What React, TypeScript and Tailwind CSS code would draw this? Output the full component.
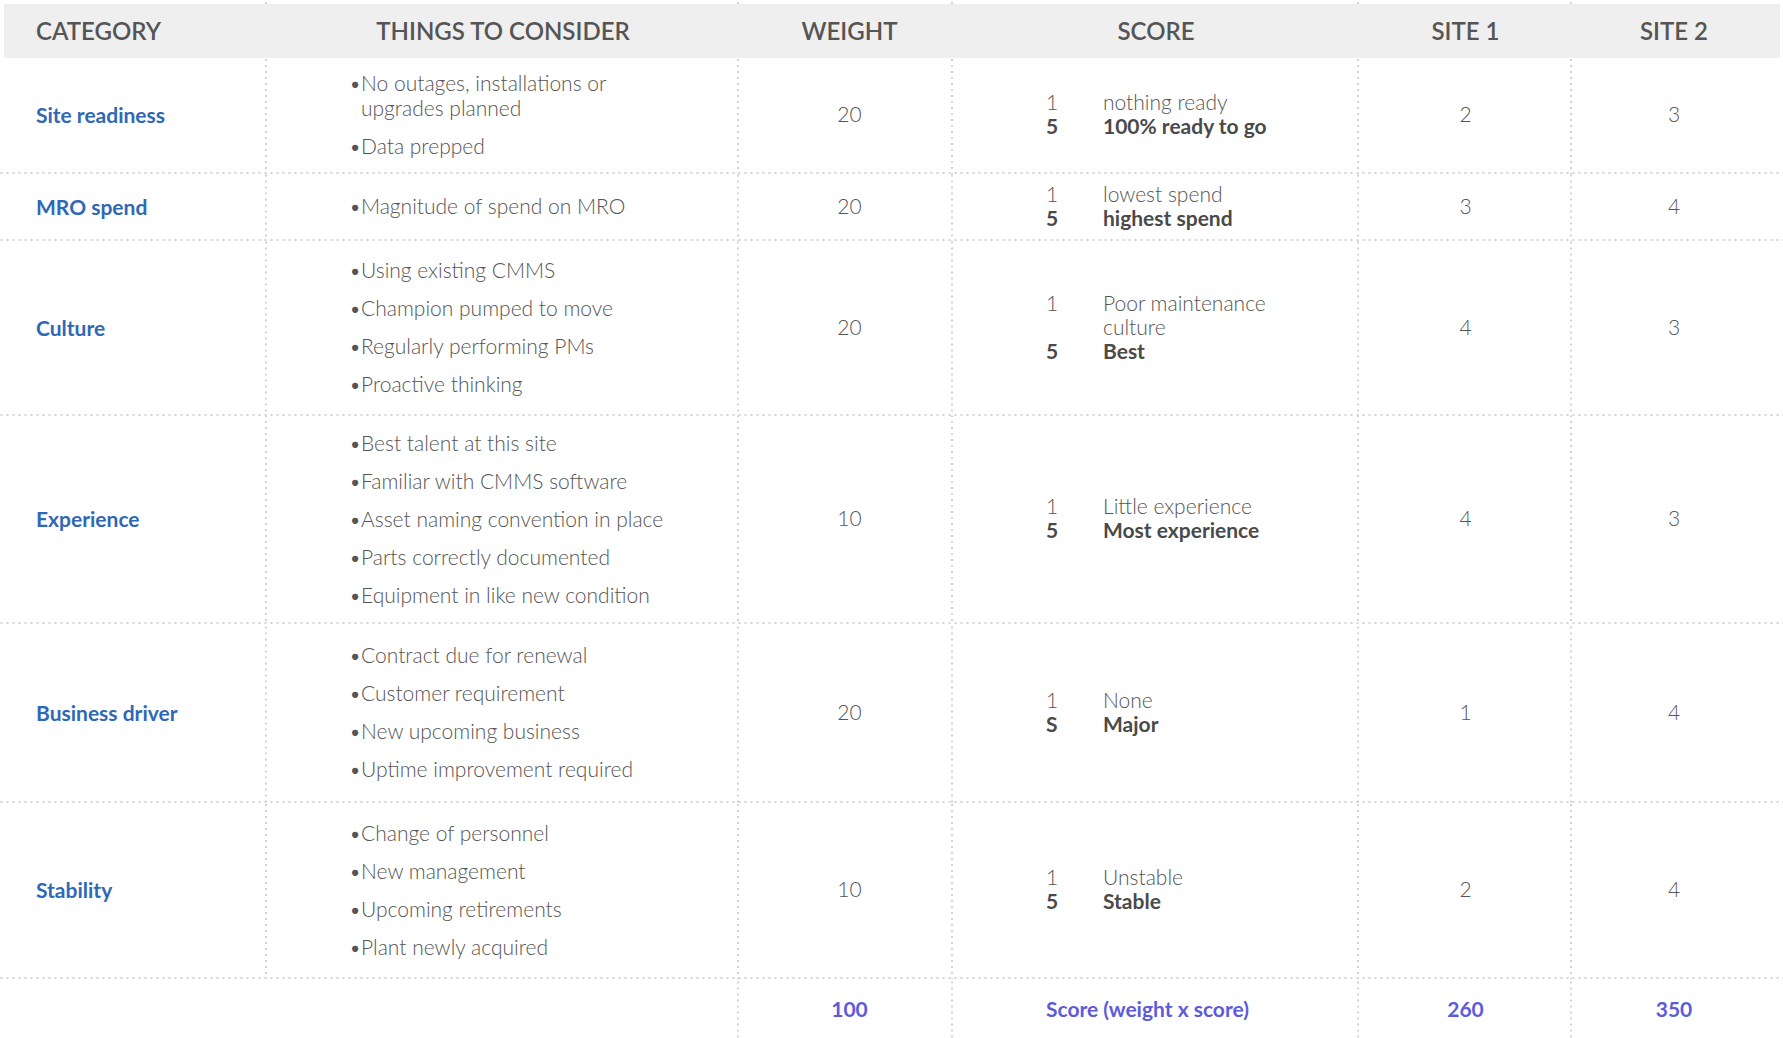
import React from "react";

type Row = {
  category: string;
  things: string[];
  weight: number;
  low: string;
  high: string;
  highNum: string;
  site1: number;
  site2: number;
  height: string;
};

const rows: Row[] = [
  {
    category: "Site readiness",
    things: ["No outages, installations or upgrades planned", "Data prepped"],
    weight: 20,
    low: "nothing ready",
    high: "100% ready to go",
    highNum: "5",
    site1: 2,
    site2: 3,
    height: "h-[116px]",
  },
  {
    category: "MRO spend",
    things: ["Magnitude of spend on MRO"],
    weight: 20,
    low: "lowest spend",
    high: "highest spend",
    highNum: "5",
    site1: 3,
    site2: 4,
    height: "h-[67px]",
  },
  {
    category: "Culture",
    things: [
      "Using existing CMMS",
      "Champion pumped to move",
      "Regularly performing PMs",
      "Proactive thinking",
    ],
    weight: 20,
    low: "Poor maintenance culture",
    high: "Best",
    highNum: "5",
    site1: 4,
    site2: 3,
    height: "h-[175px]",
  },
  {
    category: "Experience",
    things: [
      "Best talent at this site",
      "Familiar with CMMS software",
      "Asset naming convention in place",
      "Parts correctly documented",
      "Equipment in like new condition",
    ],
    weight: 10,
    low: "Little experience",
    high: "Most experience",
    highNum: "5",
    site1: 4,
    site2: 3,
    height: "h-[208px]",
  },
  {
    category: "Business driver",
    things: [
      "Contract due for renewal",
      "Customer requirement",
      "New upcoming business",
      "Uptime improvement required",
    ],
    weight: 20,
    low: "None",
    high: "Major",
    highNum: "S",
    site1: 1,
    site2: 4,
    height: "h-[179px]",
  },
  {
    category: "Stability",
    things: [
      "Change of personnel",
      "New management",
      "Upcoming retirements",
      "Plant newly acquired",
    ],
    weight: 10,
    low: "Unstable",
    high: "Stable",
    highNum: "5",
    site1: 2,
    site2: 4,
    height: "h-[176px]",
  },
];

// dotted rules drawn as repeating gradients (2px dots every 6px)
const hLine =
  "bg-[linear-gradient(to_right,#d3d3d3_2px,transparent_2px)] bg-[length:6px_2px] bg-repeat-x bg-bottom";
const vLine =
  "bg-[linear-gradient(to_bottom,#d3d3d3_2px,transparent_2px)] bg-[length:2px_6px] bg-repeat-y bg-right";

const cols = "grid grid-cols-[267px_472px_214px_406px_213px_211px]";

function HeaderCell({
  label,
  first,
  last,
  shift = "",
}: {
  label: string;
  first?: boolean;
  last?: boolean;
  shift?: string;
}) {
  return (
    <div className={`pt-1 ${first ? "pl-1" : ""} ${last ? "pr-[3px]" : vLine}`}>
      <div
        className={`h-[54px] bg-[#efefef] flex items-center text-[24px] font-semibold text-[#555] uppercase ${
          first ? "pl-[32px]" : `justify-center ${shift}`
        }`}
      >
        {label}
      </div>
    </div>
  );
}

export default function App() {
  return (
    <div
      className="w-[1783px] h-[1038px] bg-white overflow-hidden"
      style={{ fontFamily: "Lato, 'Open Sans', sans-serif" }}
    >
      <div className={cols}>
        <HeaderCell label="Category" first />
        <HeaderCell label="Things to consider" />
        <HeaderCell label="Weight" shift="pl-[7px]" />
        <HeaderCell label="Score" />
        <HeaderCell label="Site 1" />
        <HeaderCell label="Site 2" last shift="pr-[4px]" />
      </div>

      {rows.map((r) => (
        <div key={r.category} className={`${cols} ${r.height} ${hLine}`}>
          <div className={`${vLine} flex items-center pl-[36px] pb-[2px]`}>
            <span className="text-[21px] font-bold text-[#2f68b4]">
              {r.category}
            </span>
          </div>
          <div className={`${vLine} flex items-center pl-[82px] pb-[4px]`}>
            <ul className="flex flex-col gap-[13px] w-[330px]">
              {r.things.map((t) => (
                <li
                  key={t}
                  className="flex text-[21px] leading-[25px] font-light text-[#555]"
                >
                  <span className="w-[12px] shrink-0">•</span>
                  <span className="max-w-[316px]">{t}</span>
                </li>
              ))}
            </ul>
          </div>
          <div
            className={`${vLine} flex items-center justify-center pl-[7px] pb-[4px] text-[21px] font-light text-[#555]`}
          >
            {r.weight}
          </div>
          <div className={`${vLine} flex items-center pl-[93px] pb-[4px]`}>
            <div className="grid grid-cols-[57px_190px] text-[21px] leading-[24px] text-[#555]">
              <span className="font-light">1</span>
              <span className="font-light">{r.low}</span>
              <span className="font-bold text-[#4a4a4a]">{r.highNum}</span>
              <span className="font-bold text-[#4a4a4a]">{r.high}</span>
            </div>
          </div>
          <div
            className={`${vLine} flex items-center justify-center pb-[4px] text-[21px] font-light text-[#555]`}
          >
            {r.site1}
          </div>
          <div className="flex items-center justify-center pr-[7px] pb-[4px] text-[21px] font-light text-[#555]">
            {r.site2}
          </div>
        </div>
      ))}

      <div className="grid grid-cols-[739px_214px_406px_213px_211px] h-[59px] text-[21px] font-bold text-[#5d5bdc]">
        <div className={vLine} />
        <div className={`${vLine} flex items-center justify-center pl-[7px]`}>
          100
        </div>
        <div className={`${vLine} flex items-center pl-[93px]`}>
          Score (weight x score)
        </div>
        <div className={`${vLine} flex items-center justify-center`}>260</div>
        <div className="flex items-center justify-center pr-[7px]">350</div>
      </div>
    </div>
  );
}
